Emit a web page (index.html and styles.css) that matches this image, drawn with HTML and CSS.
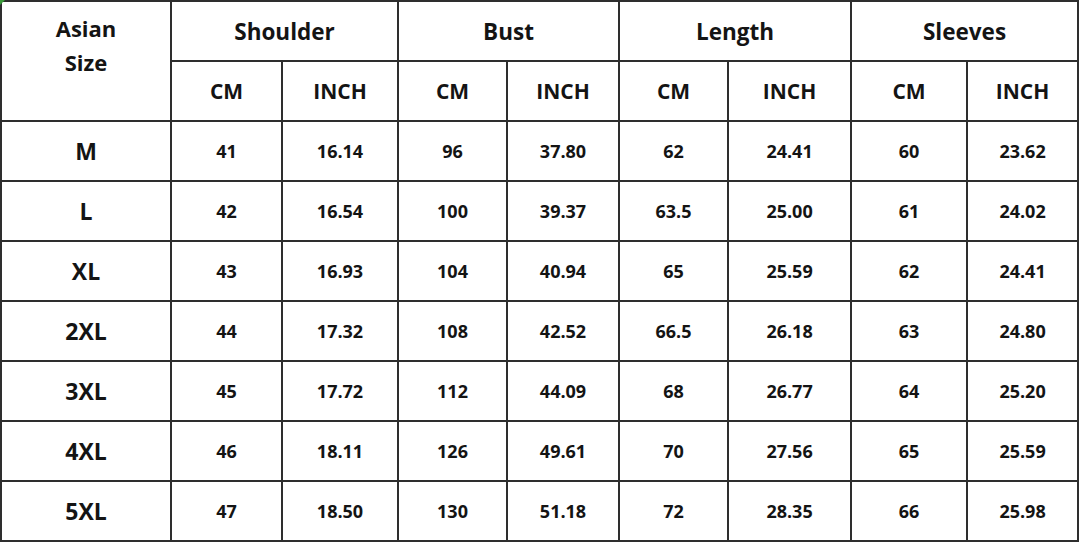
FILE: index.html
```html
<!DOCTYPE html>
<html>
<head>
<meta charset="utf-8">
<link rel="stylesheet" href="styles.css">
</head>
<body>
<div class="wrap">
<span class="corner"></span>
<table class="size-table">
  <colgroup>
    <col class="c-size"><col class="c1"><col class="c2"><col class="c3"><col class="c4"><col class="c5"><col class="c6"><col class="c7"><col class="c8">
  </colgroup>
  <thead>
    <tr>
      <th rowspan="2" class="asian">Asian<br>Size</th>
      <th colspan="2" class="group">Shoulder</th>
      <th colspan="2" class="group">Bust</th>
      <th colspan="2" class="group">Length</th>
      <th colspan="2" class="group">Sleeves</th>
    </tr>
    <tr class="units">
      <th>CM</th><th>INCH</th><th>CM</th><th>INCH</th><th>CM</th><th>INCH</th><th>CM</th><th>INCH</th>
    </tr>
  </thead>
  <tbody>
    <tr><th>M</th><td>41</td><td>16.14</td><td>96</td><td>37.80</td><td>62</td><td>24.41</td><td>60</td><td>23.62</td></tr>
    <tr><th>L</th><td>42</td><td>16.54</td><td>100</td><td>39.37</td><td>63.5</td><td>25.00</td><td>61</td><td>24.02</td></tr>
    <tr><th>XL</th><td>43</td><td>16.93</td><td>104</td><td>40.94</td><td>65</td><td>25.59</td><td>62</td><td>24.41</td></tr>
    <tr><th>2XL</th><td>44</td><td>17.32</td><td>108</td><td>42.52</td><td>66.5</td><td>26.18</td><td>63</td><td>24.80</td></tr>
    <tr><th>3XL</th><td>45</td><td>17.72</td><td>112</td><td>44.09</td><td>68</td><td>26.77</td><td>64</td><td>25.20</td></tr>
    <tr><th>4XL</th><td>46</td><td>18.11</td><td>126</td><td>49.61</td><td>70</td><td>27.56</td><td>65</td><td>25.59</td></tr>
    <tr><th>5XL</th><td>47</td><td>18.50</td><td>130</td><td>51.18</td><td>72</td><td>28.35</td><td>66</td><td>25.98</td></tr>
  </tbody>
</table>
</div>
</body>
</html>
```
FILE: styles.css
```css
html, body {
  margin: 0;
  padding: 0;
  background: #ffffff;
}
.wrap {
  position: relative;
  width: 1080px;
  height: 544px;
}
.corner {
  position: absolute;
  left: 0;
  top: 0;
  width: 0;
  height: 0;
  border-top: 5px solid #3a9a3a;
  border-right: 5px solid transparent;
}
.size-table {
  border-collapse: collapse;
  table-layout: fixed;
  width: 1079px;
  font-family: "Open Sans", "Noto Sans", sans-serif;
  font-weight: 700;
  color: #141414;
}
.c-size { width: 170px; }
.c1 { width: 111px; }
.c2 { width: 116px; }
.c3 { width: 109px; }
.c4 { width: 112px; }
.c5 { width: 109px; }
.c6 { width: 123px; }
.c7 { width: 116px; }
.c8 { width: 111px; }
.size-table th,
.size-table td {
  border: 2px solid #2e2e2e;
  height: 60px;
  padding: 0;
  text-align: center;
  vertical-align: middle;
  box-sizing: border-box;
}
.size-table td {
  font-size: 18px;
  font-weight: 700;
}
.size-table tbody th {
  font-size: 23px;
  font-weight: 700;
}
.group {
  font-size: 22.5px;
  font-weight: 700;
}
.units th {
  font-size: 21px;
  font-weight: 700;
}
.asian {
  font-size: 22px;
  font-weight: 700;
  line-height: 34px;
  vertical-align: top !important;
  padding-top: 9px !important;
}
```
